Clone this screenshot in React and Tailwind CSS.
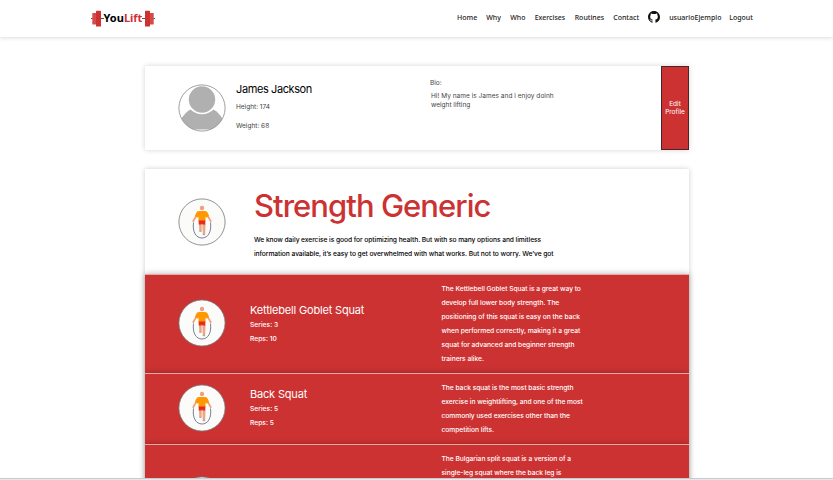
import React from "react";

const NAV_LEFT = [
  ["Home", "w-[29.200px]"],
  ["Why", "w-[24px]"],
  ["Who", "w-[24.500px]"],
  ["Exercises", "w-[40px]"],
  ["Routines", "w-[38.500px]"],
  ["Contact", "w-[35px]"],
];

const EXERCISES = [
  {
    id: "goblet",
    name: "Kettlebell Goblet Squat",
    series: 3,
    reps: 10,
    height: "h-[99px] items-center",
    lines: [
      "The Kettlebell Goblet Squat is a great way to",
      "develop full lower body strength. The",
      "positioning of this squat is easy on the back",
      "when performed correctly, making it a great",
      "squat for advanced and beginner strength",
      "trainers alike.",
    ],
  },
  {
    id: "back",
    name: "Back Squat",
    series: 5,
    reps: 5,
    height: "h-[70.500px] items-center",
    lines: [
      "The back squat is the most basic strength",
      "exercise in weightlifting, and one of the most",
      "commonly used exercises other than the",
      "competition lifts.",
    ],
  },
  {
    id: "bulgarian",
    height: "h-[113px] items-start pt-[7px]",
    lines: [
      "The Bulgarian split squat is a version of a",
      "single-leg squat where the back leg is",
    ],
  },
];

function Weights({ flip }) {
  return (
    <svg viewBox="0 0 13 17" className={flip ? "h-[17px] w-[13px] -scale-x-100" : "h-[17px] w-[13px]"}>
      <path d="M0 8.500H13" stroke="#555" strokeWidth="1" />
      <rect x="1.300" y="3" width="3.800" height="11.500" rx=".5" fill="#d64a4a" />
      <rect x="5" y="0.800" width="5" height="15.700" rx=".6" fill="#cd3232" />
    </svg>
  );
}

function Logo() {
  return (
    <div className="flex items-center whitespace-nowrap">
      <Weights />
      <span className="-mt-px w-[38px] text-center font-['Noto_Sans'] text-[11px] leading-4 font-bold text-black">
        You<span className="text-[#cd3232]">Lift</span>
      </span>
      <Weights flip />
    </div>
  );
}

function GithubIcon() {
  return (
    <svg viewBox="0 0 16 16" className="mt-[-2px] h-[12px] w-[12px]" fill="#111">
      <path d="M8 0C3.58 0 0 3.58 0 8c0 3.54 2.29 6.53 5.47 7.59.4.07.55-.17.55-.38 0-.19-.01-.82-.01-1.49-2.01.37-2.53-.49-2.69-.94-.09-.23-.48-.94-.82-1.13-.28-.15-.68-.52-.01-.53.63-.01 1.08.58 1.23.82.72 1.21 1.87.87 2.33.66.07-.52.28-.87.51-1.07-1.78-.2-3.64-.89-3.64-3.95 0-.87.31-1.59.82-2.15-.08-.2-.36-1.02.08-2.12 0 0 .67-.21 2.2.82A7.6 7.6 0 0 1 8 3.86c.68 0 1.36.09 2 .27 1.53-1.04 2.2-.82 2.2-.82.44 1.1.16 1.92.08 2.12.51.56.82 1.27.82 2.15 0 3.07-1.87 3.75-3.65 3.95.29.25.54.73.54 1.48 0 1.07-.01 1.93-.01 2.2 0 .21.15.46.55.38A8.01 8.01 0 0 0 16 8c0-4.42-3.58-8-8-8Z" />
    </svg>
  );
}

function UserAvatar() {
  return (
    <svg viewBox="0 0 48 48" className="h-[48px] w-[48px] shrink-0">
      <clipPath id="face">
        <circle cx="24" cy="24" r="23" />
      </clipPath>
      <circle cx="24" cy="24" r="23.100" fill="#fff" />
      <g clipPath="url(#face)" fill="#b0b0b0">
        <path d="M1 39C5 31 9 27.500 12.500 25.500C19 31.800 29 31.800 35.500 25.500C40 28 43 31.500 47 39V45.500H1Z" />
        <circle cx="24" cy="15.500" r="13.200" />
      </g>
      <circle cx="24" cy="24" r="23.100" fill="none" stroke="#888" strokeWidth=".8" />
    </svg>
  );
}

function JumpRope({ className }) {
  return (
    <svg viewBox="0 0 48 48" className={className}>
      <circle cx="24" cy="24" r="23.100" fill="#fbfbf9" stroke="#777" strokeWidth=".8" />
      <path d="M15.500 24.500C14.300 34 18 40 24 40S33.700 34 32.500 24.500" fill="none" stroke="#68708f" strokeWidth=".9" />
      <circle cx="24" cy="10" r="2.200" fill="#eda080" />
      <path d="M18.500 17.500L15.200 23.200M29.500 17.500L32.800 23.200" stroke="#f0a07c" strokeWidth="1.700" strokeLinecap="round" />
      <path d="M21 26H23.700V33H21.300ZM24.400 26H27.500L27.100 37H24.800Z" fill="#eea583" />
      <path d="M21.300 32.500H23.500V34H21.300ZM24.800 35.800H27.100V37.300H24.800Z" fill="#b6aaa8" />
      <path d="M21 12.900H27C29 13 30 14.500 31 18L28.500 19.700L27.500 18.500V23.500H20.500V18.500L19.500 19.700L17 18C18 14.500 19 13 21 12.900Z" fill="#ff9800" />
      <path d="M20.700 22.500H27.300V26.500H24.500L24 25.500L23.500 26.500H20.700Z" fill="#e42b20" />
    </svg>
  );
}

function ExerciseRow({ exercise }) {
  return (
    <article className={`${exercise.height} flex shrink-0 border-t border-[#e8a9a5] bg-[#cd3232] pl-[33.500px] text-white shadow-[0_0_6px_rgba(0,0,0,0.3)]`}>
      <JumpRope className={exercise.name ? "mt-[-2px] h-[48px] w-[48px] shrink-0" : "mt-[24px] h-[48px] w-[48px] shrink-0"} />
      <div className="ml-[24px] w-[191.500px] whitespace-nowrap">
        {exercise.name && (
          <>
            <h2 className="mt-[-1px] text-[11px] leading-[16px] tracking-[-0.18px]">{exercise.name}</h2>
            <p className="text-[6.700px] leading-[14px] font-medium">Series: {exercise.series}</p>
            <p className="text-[6.700px] leading-[14px] font-medium">Reps: {exercise.reps}</p>
          </>
        )}
      </div>
      <div className="text-[6.700px] leading-[14.080px] font-medium tracking-[-0.035px] whitespace-nowrap">
        {exercise.lines.map((line) => (
          <p key={line}>{line}</p>
        ))}
      </div>
    </article>
  );
}

export default function App() {
  return (
    <div className="flex h-[480px] w-[833px] flex-col overflow-hidden bg-white font-[Inter,sans-serif] text-[#222]">
      <header className="z-10 flex h-[37px] shrink-0 items-center pl-[90.500px] shadow-[0_1px_4px_rgba(0,0,0,0.14)]">
        <Logo />
        <nav className="-mt-px ml-[302.500px] flex items-center font-['Noto_Sans'] text-[7px] leading-[12px] font-medium whitespace-nowrap text-[#222]">
          {NAV_LEFT.map(([label, width]) => (
            <a key={label} className={width}>{label}</a>
          ))}
          <GithubIcon />
          <a className="ml-[9px] w-[60px]">usuarioEjemplo</a>
          <a>Logout</a>
        </nav>
      </header>

      <main className="flex min-h-0 flex-1 flex-col overflow-hidden pt-[29px] pl-[144.500px]">
        <section className="flex h-[84px] w-[544.500px] shrink-0 pl-[33px] shadow-[0_0_5px_rgba(0,0,0,0.18)]">
          <div className="pt-[18px]">
            <UserAvatar />
          </div>
          <div className="w-[194.500px] pt-[15px] pl-[10.500px] whitespace-nowrap">
            <h1 className="text-[11px] leading-[16px] tracking-[-0.4px] text-black">James Jackson</h1>
            <p className="mt-[4px] text-[6.500px] leading-[12px] text-[#444]">Height: 174</p>
            <p className="mt-[7px] text-[6.500px] leading-[12px] text-[#444]">Weight: 68</p>
          </div>
          <div className="flex-1 pt-[13px] pl-[10px] text-[6.500px] leading-[9.500px] whitespace-nowrap text-[#444]">
            <p>Bio:</p>
            <p className="mt-[3px] pl-px tracking-[0.03px]">Hi! My name is James and i enjoy doinh</p>
            <p className="pl-px">weight lifting</p>
          </div>
          <button className="flex w-[28px] flex-col items-center justify-center border border-[#4a2525] bg-[#cd3232] pt-[2px] text-[6.500px] leading-[7.700px] text-white">
            <span>Edit</span>
            <span>Profile</span>
          </button>
        </section>

        <section className="mt-[19px] flex w-[544.500px] shrink-0 flex-col shadow-[0_0_5px_rgba(0,0,0,0.2)]">
          <div className="flex h-[105px] shrink-0 pl-[33px]">
            <div className="pt-[28.500px]">
              <JumpRope className="h-[48px] w-[48px]" />
            </div>
            <div className="pt-[16px] pl-[28.500px] whitespace-nowrap">
              <h1 className="text-[31px] leading-[42px] font-medium tracking-[-0.960px] text-[#cd3232]">Strength Generic</h1>
              <div className="mt-[5.500px] text-[6.700px] leading-[14px] font-medium tracking-[-0.068px] text-black">
                <p>We know daily exercise is good for optimizing health. But with so many options and limitless</p>
                <p>information available, it’s easy to get overwhelmed with what works. But not to worry. We’ve got</p>
              </div>
            </div>
          </div>
          {EXERCISES.map((exercise) => (
            <ExerciseRow key={exercise.id} exercise={exercise} />
          ))}
        </section>
      </main>
      <footer className="z-10 h-[2px] shrink-0 border-t border-[#c8cbcd] bg-[#e6e8ea]" />
    </div>
  );
}
